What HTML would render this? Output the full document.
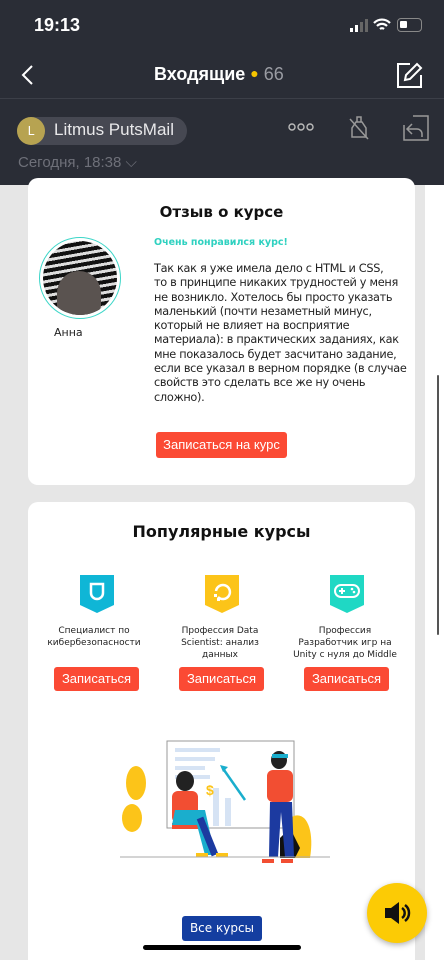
<!DOCTYPE html>
<html><head><meta charset="utf-8"><style>
*{margin:0;padding:0;box-sizing:border-box}
body{width:444px;height:960px;overflow:hidden;background:#fff;font-family:"DejaVu Sans","Liberation Sans",sans-serif;position:relative}
.hdr{position:absolute;left:0;top:0;width:444px;height:185px;background:#2a2d36;color:#fff}
.gray{position:absolute;left:0;top:185px;width:425px;height:775px;background:#e6e6e6}
.card{position:absolute;left:28px;width:387px;background:#fff;border-radius:10px}
.btn{position:absolute;background:#fb4a34;color:#fff;border-radius:3px;text-align:center;font-size:13px;font-family:"Liberation Sans",sans-serif}
.ic{position:absolute;width:34px;height:38px}
.ct{position:absolute;width:120px;text-align:center;font-size:9px;color:#222;line-height:12px;white-space:nowrap}
</style></head><body>
<div class="hdr">
 <div style="position:absolute;left:34px;top:15px;font:bold 18px 'Liberation Sans',sans-serif">19:13</div>
 <div style="position:absolute;left:350px;top:28px;width:3px;height:4px;background:#fff"></div>
 <div style="position:absolute;left:355px;top:25px;width:3px;height:7px;background:#fff"></div>
 <div style="position:absolute;left:360px;top:22px;width:3px;height:10px;background:#666"></div>
 <div style="position:absolute;left:365px;top:19px;width:3px;height:13px;background:#666"></div>
 <svg style="position:absolute;left:373px;top:18px" width="18" height="14" viewBox="0 0 18 14"><path d="M1 5a11 11 0 0 1 16 0M4 8a7 7 0 0 1 10 0M7 11a3 3 0 0 1 4 0" stroke="#fff" stroke-width="2.2" fill="none"/></svg>
 <div style="position:absolute;left:397px;top:18px;width:25px;height:14px;border:1.5px solid #888;border-radius:4px"><div style="margin:2px;width:7px;height:7px;background:#fff;border-radius:1px"></div></div>
 <svg style="position:absolute;left:20px;top:64px" width="14" height="22"><path d="M12 2L3 11l9 9" stroke="#fff" stroke-width="2" fill="none"/></svg>
 <div style="position:absolute;left:154px;top:64px;font:bold 18px 'Liberation Sans',sans-serif">Входящие <span style="color:#f5c400;font-size:14px;vertical-align:2px">●</span> <span style="font-weight:normal;color:#9a9ca3">66</span></div>
 <svg style="position:absolute;left:396px;top:61px" width="28" height="28"><path d="M14 3H2v23h23V14" stroke="#fff" stroke-width="2" fill="none"/><path d="M9 19l1-5L21 3l4 4-11 11z" stroke="#fff" stroke-width="2" fill="none"/></svg>
 <div style="position:absolute;left:0;top:98px;width:444px;height:1px;background:#3c3f48"></div>
 <div style="position:absolute;left:17px;top:117px;width:170px;height:28px;background:#464852;border-radius:14px"></div>
 <div style="position:absolute;left:17px;top:117px;width:28px;height:28px;background:#b7a351;border-radius:50%;font-size:12px;text-align:center;line-height:28px">L</div>
 <div style="position:absolute;left:54px;top:120px;font:17px 'Liberation Sans',sans-serif;color:#e8e8ea">Litmus PutsMail</div>
 <svg style="position:absolute;left:288px;top:123px" width="26" height="8"><circle cx="4" cy="4" r="3" stroke="#bbb" stroke-width="1.4" fill="none"/><circle cx="13" cy="4" r="3" stroke="#bbb" stroke-width="1.4" fill="none"/><circle cx="22" cy="4" r="3" stroke="#bbb" stroke-width="1.4" fill="none"/></svg>
 <svg style="position:absolute;left:348px;top:115px" width="22" height="26"><path d="M9 2h4v5h-4zM8 7h6l4 6v9H4v-9z" stroke="#999" stroke-width="1.5" fill="none"/><path d="M2 4l18 20" stroke="#999" stroke-width="1.5"/></svg>
 <svg style="position:absolute;left:403px;top:115px" width="26" height="26"><path d="M10 1h15v24H1V10" stroke="#999" stroke-width="1.5" fill="none"/><path d="M9 9L4 14l5 5M4 14h10a5 5 0 0 1 5 5v3" stroke="#999" stroke-width="1.5" fill="none"/></svg>
 <div style="position:absolute;left:18px;top:154px;font:15px 'Liberation Sans',sans-serif;color:#6e7079">Сегодня, 18:38 ⌵</div>
</div>
<div class="gray"></div>
<div style="position:absolute;left:437px;top:375px;width:2px;height:260px;background:#555;border-radius:1px"></div>
<div class="card" style="top:178px;height:307px">
 <div style="position:absolute;left:0;width:387px;top:25px;text-align:center;font-weight:bold;font-size:15px;color:#111">Отзыв о курсе</div>
 <div style="position:absolute;left:11px;top:59px;width:82px;height:82px;border:1.5px solid #3dd6c8;border-radius:50%;padding:3px"><div style="width:100%;height:100%;border-radius:50%;overflow:hidden;background:repeating-linear-gradient(170deg,#111 0 4px,#ddd 4px 7px)"><div style="position:relative;left:14px;top:30px;width:44px;height:44px;border-radius:50% 50% 10px 10px;background:#5a5350"></div></div></div>
 <div style="position:absolute;left:26px;top:148px;font-size:11px;color:#222">Анна</div>
 <div style="position:absolute;left:126px;top:59px;font-size:9.5px;font-weight:bold;color:#2fd1c0">Очень понравился курс!</div>
 <div style="position:absolute;left:126px;top:84px;width:262px;font-size:11.3px;line-height:14.3px;color:#222;letter-spacing:-0.3px;white-space:nowrap">Так как я уже имела дело с HTML и CSS,<br>то в принципе никаких трудностей у меня<br>не возникло. Хотелось бы просто указать<br>маленький (почти незаметный минус,<br>который не влияет на восприятие<br>материала): в практических заданиях, как<br>мне показалось будет засчитано задание,<br>если все указал в верном порядке (в случае<br>свойств это сделать все же ну очень<br>сложно).</div>
 <div class="btn" style="left:128px;top:254px;width:131px;height:26px;line-height:26px;font-size:13px">Записаться на курс</div>
</div>
<div class="card" style="top:502px;height:470px">
 <div style="position:absolute;left:0;width:387px;top:20px;text-align:center;font-weight:bold;font-size:16px;color:#111">Популярные курсы</div>
 <svg class="ic" style="left:52px;top:73px" viewBox="0 0 34 38"><path d="M0 0h34v30l-17 8-17-8z" fill="#0fb6d6"/><path d="M11 9v9a6 6 0 0 0 12 0V9z" stroke="#fff" stroke-width="2.5" fill="none"/></svg>
 <svg class="ic" style="left:177px;top:73px" viewBox="0 0 34 38"><path d="M0 0h34v30l-17 8-17-8z" fill="#fcc419"/><path d="M13 22a7 7 0 1 0-2-6" stroke="#fff" stroke-width="2.5" fill="none"/><rect x="9" y="19" width="3" height="3" fill="#fff"/><rect x="12" y="23" width="3" height="3" fill="#fff"/></svg>
 <svg class="ic" style="left:302px;top:73px" viewBox="0 0 34 38"><path d="M0 0h34v30l-17 8-17-8z" fill="#1fd8c4"/><rect x="5" y="10" width="24" height="12" rx="6" stroke="#fff" stroke-width="2" fill="none"/><path d="M9 16h6M12 13v6" stroke="#fff" stroke-width="2"/><circle cx="22" cy="14" r="1.3" fill="#fff"/><circle cx="24" cy="17" r="1.3" fill="#fff"/></svg>
 <div class="ct" style="left:6px;top:123px">Специалист по<br>кибербезопасности</div>
 <div class="ct" style="left:132px;top:123px">Профессия Data<br>Scientist: анализ<br>данных</div>
 <div class="ct" style="left:257px;top:123px">Профессия<br>Разработчик игр на<br>Unity с нуля до Middle</div>
 <div class="btn" style="left:26px;top:165px;width:85px;height:24px;line-height:24px">Записаться</div>
 <div class="btn" style="left:151px;top:165px;width:85px;height:24px;line-height:24px">Записаться</div>
 <div class="btn" style="left:276px;top:165px;width:85px;height:24px;line-height:24px">Записаться</div>
 <svg style="position:absolute;left:92px;top:236px" width="210" height="130" viewBox="0 0 210 130">
  <rect x="47" y="3" width="127" height="87" fill="#fff" stroke="#999"/>
  <path d="M55 12h45M55 21h40M55 30h30M55 39h35" stroke="#d6e3f4" stroke-width="4"/>
  <rect x="93" y="50" width="6" height="38" fill="#d6e3f4"/><rect x="105" y="60" width="6" height="28" fill="#d6e3f4"/>
  <path d="M125 62L104 32" stroke="#1aaecd" stroke-width="2.5"/><path d="M100 27l8 2-5 5z" fill="#1aaecd"/>
  <text x="86" y="57" font-size="14" font-weight="bold" fill="#fcc419" font-family="Liberation Sans">$</text>
  <ellipse cx="16" cy="45" rx="10" ry="17" fill="#fcc419"/><ellipse cx="12" cy="80" rx="10" ry="14" fill="#fcc419"/>
  <path d="M170 80c15-10 25 10 20 40h-18z" fill="#fcc419"/><path d="M160 100l10-10 10 20-5 10h-15z" fill="#111"/>
  <rect x="52" y="85" width="26" height="6" fill="#f24e32"/>
  <rect x="52" y="53" width="26" height="32" rx="6" fill="#f24e32"/>
  <ellipse cx="65" cy="43" rx="9" ry="10" fill="#222"/>
  <path d="M55 72h30l10 45h-10l-8-30h-25z" fill="#1aaecd"/><path d="M80 80l15 37" stroke="#1c3aa0" stroke-width="7"/>
  <path d="M76 117h12M96 117h12" stroke="#fcc419" stroke-width="4"/>
  <rect x="147" y="32" width="26" height="32" rx="6" fill="#f24e32"/><ellipse cx="159" cy="22" rx="8" ry="9" fill="#222"/>
  <path d="M152 18h16" stroke="#1aaecd" stroke-width="4"/>
  <path d="M150 64h22l2 55h-9l-4-45-3 45h-9z" fill="#1c3aa0"/>
  <path d="M142 123h12M161 123h12" stroke="#f24e32" stroke-width="4"/>
  <path d="M0 119h210" stroke="#aaa"/>
 </svg>
 <div style="position:absolute;left:154px;top:414px;width:80px;height:25px;background:#143ea0;border-radius:3px;color:#fff;font-size:12px;text-align:center;line-height:25px">Все курсы</div>
</div>
<div style="position:absolute;left:143px;top:945px;width:158px;height:5px;background:#000;border-radius:3px"></div>
<div style="position:absolute;left:367px;top:883px;width:60px;height:60px;background:#fccb05;border-radius:50%;box-shadow:0 2px 6px rgba(0,0,0,.3)"><svg style="margin:17px 0 0 16px" width="28" height="26"><path d="M2 8h6l8-6v22l-8-6H2z" fill="#111"/><path d="M19 8a6 6 0 0 1 0 10M22 5a10 10 0 0 1 0 16" stroke="#111" stroke-width="2.5" fill="none"/></svg></div>
</body></html>
